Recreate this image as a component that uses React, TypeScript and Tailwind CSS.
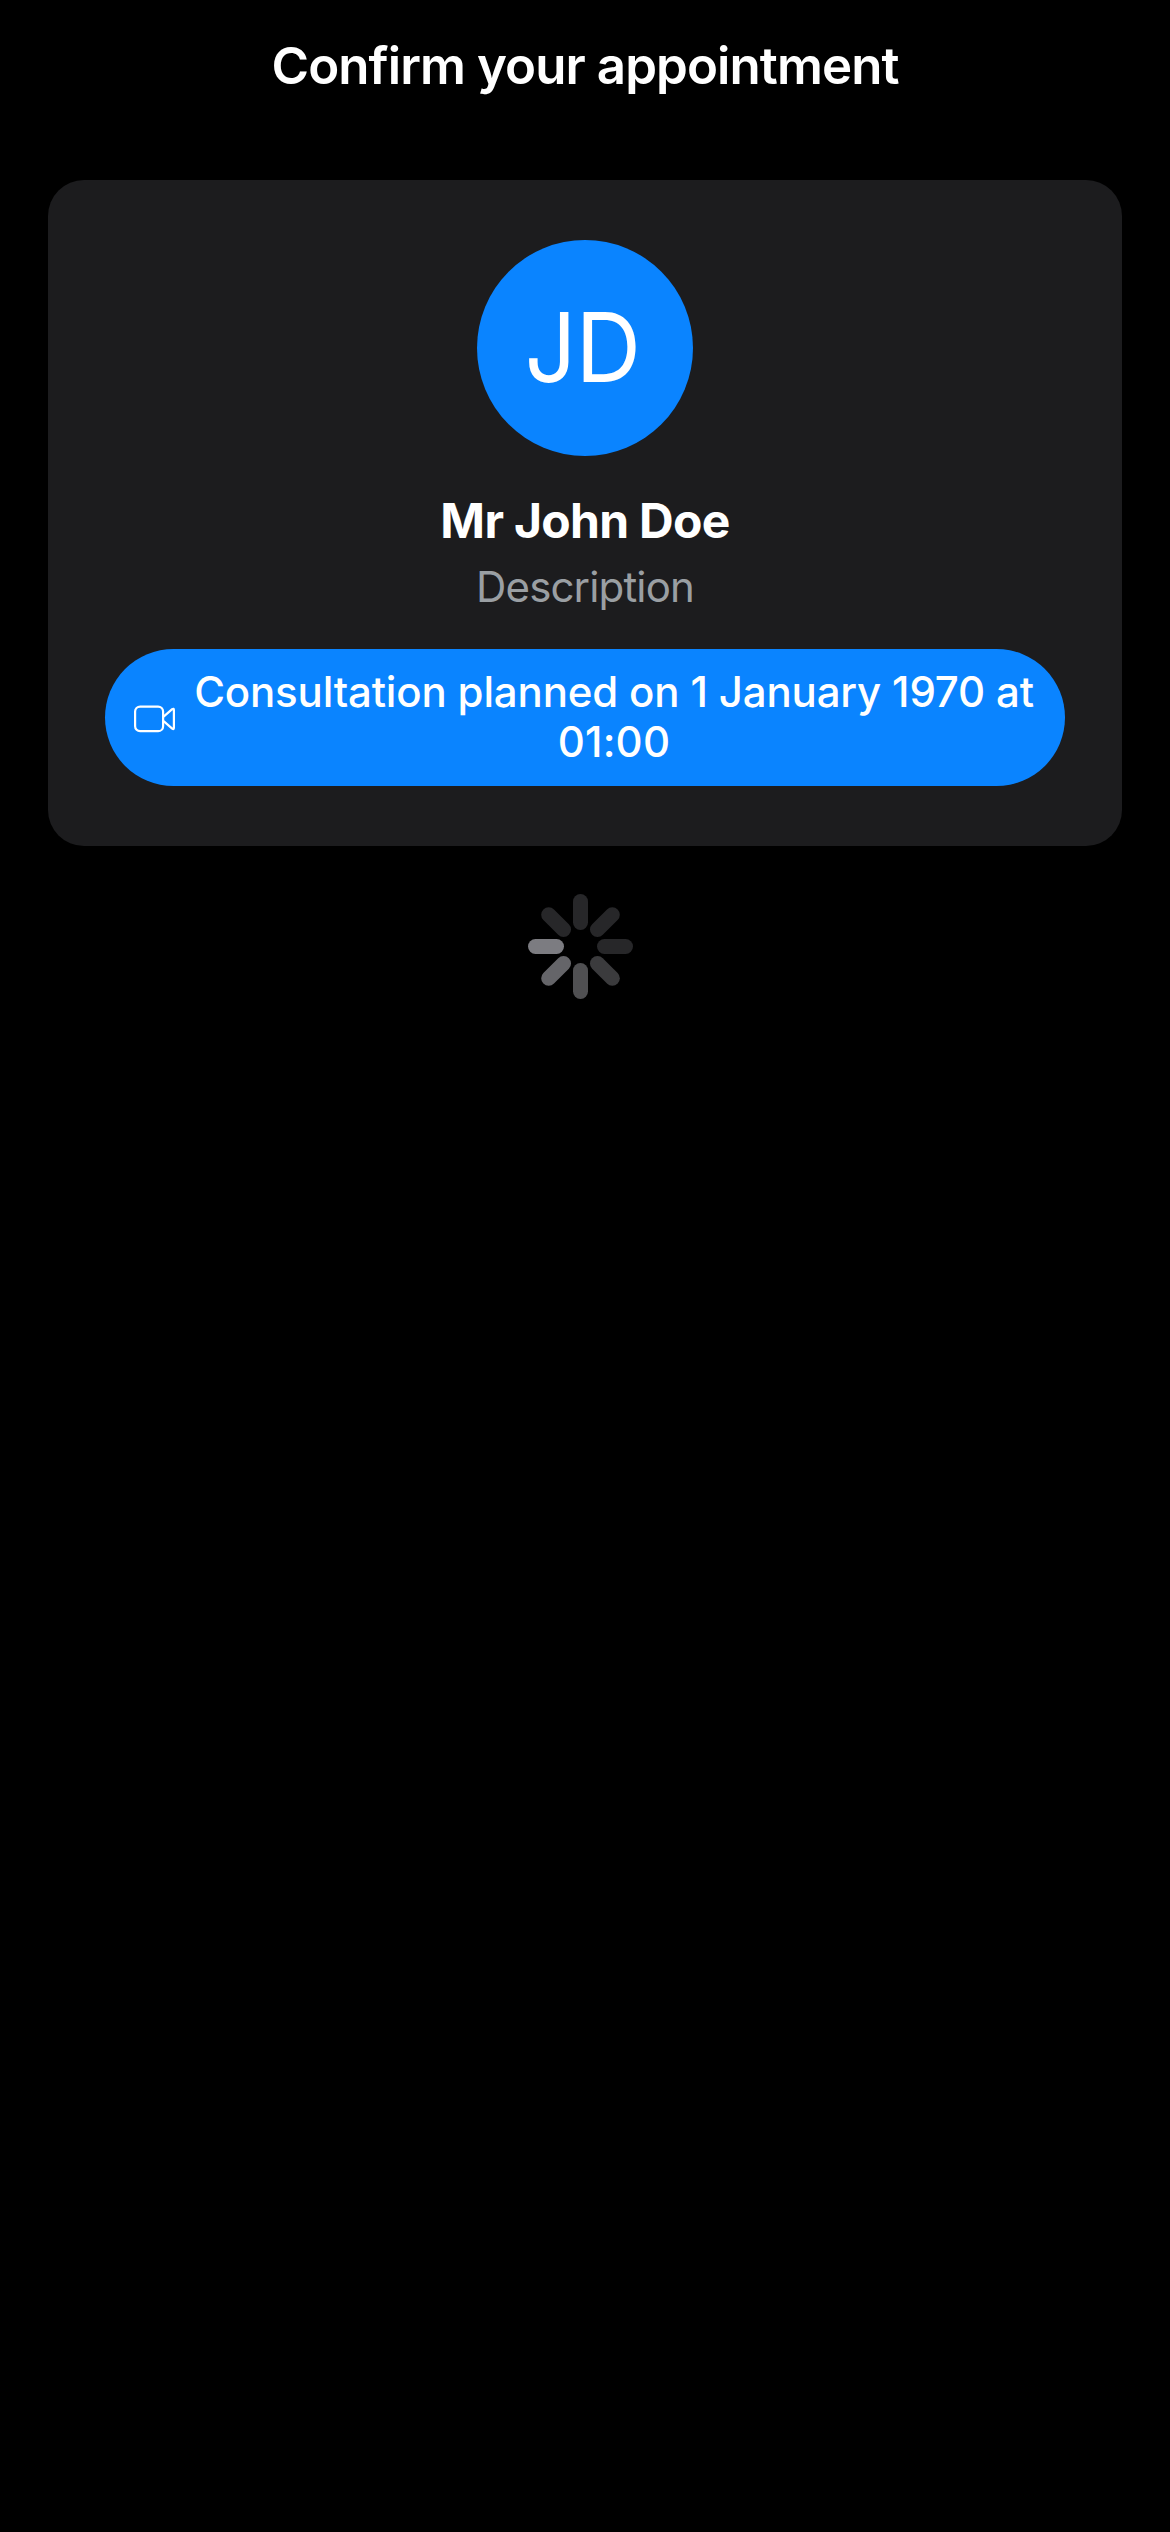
const bars = [
  { angle: 0, color: '#272729' },
  { angle: 45, color: '#272729' },
  { angle: 90, color: '#272729' },
  { angle: 135, color: '#3b3b3d' },
  { angle: 180, color: '#505052' },
  { angle: 225, color: '#656569' },
  { angle: 270, color: '#7c7c81' },
  { angle: 315, color: '#272729' },
];

function Spinner() {
  return (
    <svg viewBox="0 0 105 105" className="mt-12 ml-[528px] size-[105px] shrink-0" role="img" aria-label="Loading">
      {bars.map((bar) => (
        <rect
          key={bar.angle}
          x="45"
          y="0"
          width="15"
          height="36"
          rx="7.5"
          fill={bar.color}
          transform={`rotate(${bar.angle} 52.5 52.5)`}
        />
      ))}
    </svg>
  );
}

function VideoIcon() {
  return (
    <svg
      viewBox="0 0 42 28"
      className="mt-[3px] h-7 w-[42px] shrink-0"
      fill="none"
      stroke="white"
      strokeWidth="2.2"
      strokeLinejoin="round"
      aria-hidden="true"
    >
      <rect x="1.1" y="1.6" width="28" height="24.6" rx="5" />
      <path d="M29.6 11.6 L38.2 4.2 Q39.9 3 39.9 5 V22.8 Q39.9 24.8 38.2 23.6 L29.6 16.2" />
    </svg>
  );
}

export default function App() {
  return (
    <div className="flex h-[2532px] w-[1170px] flex-col overflow-hidden bg-black font-['Inter',sans-serif] text-white">
      <header className="flex h-[132px] shrink-0 items-center justify-center">
        <h1 className="text-[51px] leading-[60px] font-semibold tracking-[-0.92px] whitespace-nowrap">
          Confirm your appointment
        </h1>
      </header>

      <main className="flex flex-col px-12 pt-12">
        <section className="flex h-[666px] flex-col items-center rounded-[36px] bg-[#1c1c1e] pt-[60px]">
          <div className="flex size-[216px] items-center justify-center rounded-full bg-[#0a84ff] pr-1 pb-0.5 text-[96px] leading-[116px]">
            <span className="scale-x-[0.94] tracking-[-0.5px]">JD</span>
          </div>
          <h2 className="mt-9 text-[48px] leading-[58px] font-bold tracking-[-0.7px] whitespace-nowrap">
            Mr John Doe
          </h2>
          <p className="mt-3 text-[42px] leading-[50px] tracking-[-0.85px] whitespace-nowrap text-[#9a9fa3]">
            Description
          </p>
          <div className="mt-[37px] flex h-[137px] w-[960px] items-center rounded-full bg-[#0a84ff] pl-[29px]">
            <VideoIcon />
            <p className="mb-0.5 ml-[17px] w-[842px] text-center text-[42px] leading-[50px] font-medium tracking-[-0.16px] whitespace-nowrap">
              Consultation planned on 1 January 1970 at
              <br />
              <span className="tracking-[0.2px]">01:00</span>
            </p>
          </div>
        </section>
      </main>

      <Spinner />
    </div>
  );
}
